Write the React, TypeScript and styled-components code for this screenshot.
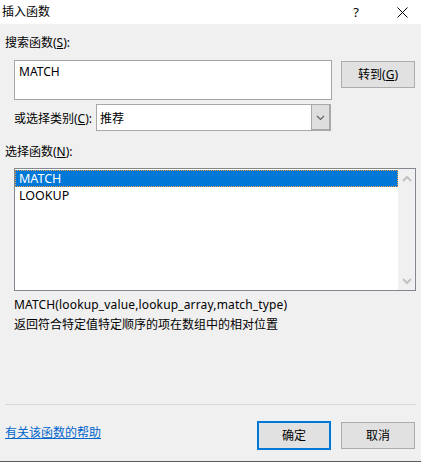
import React from "react";
import styled, { createGlobalStyle } from "styled-components";

const GlobalStyle = createGlobalStyle`
  html, body {
    margin: 0;
    padding: 0;
    background: #f0f0f0;
  }
  body {
    font-family: "Noto Sans", "Noto Sans CJK SC", sans-serif;
    font-size: 12px;
    color: #000;
  }
`;

const ChevronDown = ({ color = "#606060", size = 9 }: { color?: string; size?: number }) => (
  <svg width={size} height={size} viewBox="0 0 9 9">
    <path d="M1 3 L4.5 6.5 L8 3" fill="none" stroke={color} strokeWidth="1.2" />
  </svg>
);

const ChevronUp = ({ color = "#c2c2c2" }: { color?: string }) => (
  <svg width="10" height="8" viewBox="0 0 10 8">
    <path d="M1 6 L5 2 L9 6" fill="none" stroke={color} strokeWidth="2" />
  </svg>
);

export default function App() {
  const items = ["MATCH", "LOOKUP"];

  return (
    <Window>
      <GlobalStyle />
      <TitleBar>
        <Title>插入函数</Title>
        <TitleButtons>
          <Help>?</Help>
          <CloseIcon width="11" height="11" viewBox="0 0 11 11">
            <path d="M0.5 0.5 L10.5 10.5 M10.5 0.5 L0.5 10.5" stroke="#000" strokeWidth="1" />
          </CloseIcon>
        </TitleButtons>
      </TitleBar>

      <Body>
        <Label>搜索函数(<u>S</u>):</Label>
        <SearchRow>
          <SearchBox>MATCH</SearchBox>
          <Button>转到(<u>G</u>)</Button>
        </SearchRow>

        <CategoryRow>
          <span>或选择类别(<u>C</u>):</span>
          <Select>
            <SelectValue>推荐</SelectValue>
            <DropButton>
              <ChevronDown />
            </DropButton>
          </Select>
        </CategoryRow>

        <Label $top={13}>选择函数(<u>N</u>):</Label>
        <ListBox>
          <ListItems>
            {items.map((item, i) => (
              <ListItem key={item} $selected={i === 0}>
                {item}
              </ListItem>
            ))}
          </ListItems>
          <ScrollBar>
            <ChevronUp />
            <ChevronDownWrap>
              <ChevronUp />
            </ChevronDownWrap>
          </ScrollBar>
        </ListBox>

        <Description>
          <Signature>MATCH(lookup_value,lookup_array,match_type)</Signature>
          <div>返回符合特定值特定顺序的项在数组中的相对位置</div>
        </Description>
      </Body>

      <Separator />
      <Footer>
        <HelpLink href="#">有关该函数的帮助</HelpLink>
        <FooterButtons>
          <Button $primary>确定</Button>
          <Button>取消</Button>
        </FooterButtons>
      </Footer>
    </Window>
  );
}

const Window = styled.div`
  width: 421px;
  height: 462px;
  box-sizing: border-box;
  background: #f0f0f0;
  border-bottom: 1px solid #5a5a5a;
  display: flex;
  flex-direction: column;
`;

const TitleBar = styled.div`
  height: 24px;
  background: #fff;
  display: flex;
  align-items: center;
  justify-content: space-between;
  padding: 0 13px 0 2px;
`;

const Title = styled.div`
  font-size: 12px;
  line-height: 16px;
`;

const TitleButtons = styled.div`
  display: flex;
  align-items: center;
  gap: 38px;
`;

const Help = styled.span`
  font-size: 13px;
  line-height: 16px;
`;

const CloseIcon = styled.svg`
  display: block;
`;

const Body = styled.div`
  flex: 1;
  padding: 0 5px;
  display: flex;
  flex-direction: column;
`;

const Label = styled.div<{ $top?: number }>`
  margin-top: ${(p) => p.$top ?? 11}px;
  line-height: 16px;
`;

const SearchRow = styled.div`
  margin-top: 9px;
  margin-left: 9px;
  display: flex;
  align-items: flex-start;
  gap: 9px;
`;

const SearchBox = styled.div`
  width: 318px;
  height: 40px;
  box-sizing: border-box;
  background: #fff;
  border: 1px solid #a5a5a5;
  padding: 2px 4px;
  line-height: 18px;
`;

const Button = styled.div<{ $primary?: boolean }>`
  width: 74px;
  height: ${(p) => (p.$primary ? 29 : 27)}px;
  box-sizing: border-box;
  margin-top: ${(p) => (p.$primary ? 0 : 1)}px;
  background: #e1e1e1;
  border: ${(p) => (p.$primary ? "2px solid #0078d7" : "1px solid #adadad")};
  display: flex;
  align-items: center;
  justify-content: center;
  line-height: 16px;
`;

const CategoryRow = styled.div`
  margin-top: 4px;
  margin-left: 9px;
  display: flex;
  align-items: center;
  gap: 4px;
`;

const Select = styled.div`
  width: 235px;
  height: 27px;
  box-sizing: border-box;
  background: #fff;
  border: 1px solid #a8a8a8;
  display: flex;
`;

const SelectValue = styled.div`
  flex: 1;
  padding-left: 3px;
  display: flex;
  align-items: center;
`;

const DropButton = styled.div`
  width: 17px;
  background: #dedede;
  border-left: 1px solid #a8a8a8;
  border-right: 1px solid #a8a8a8;
  border-bottom: 1px solid #a8a8a8;
  display: flex;
  align-items: center;
  justify-content: center;
`;

const ListBox = styled.div`
  margin-top: 8px;
  margin-left: 9px;
  width: 402px;
  height: 123px;
  box-sizing: border-box;
  border: 1px solid #828790;
  background: #fff;
  display: flex;
`;

const ListItems = styled.div`
  flex: 1;
  padding: 1px 0 0 0;
`;

const ListItem = styled.div<{ $selected?: boolean }>`
  height: 17px;
  box-sizing: border-box;
  padding-left: 3px;
  line-height: 16px;
  font-size: 12.5px;
  color: ${(p) => (p.$selected ? "#fff" : "#000")};
  background: ${(p) => (p.$selected ? "#0078d7" : "transparent")};
  border: 1px dotted ${(p) => (p.$selected ? "#f0a040" : "transparent")};
`;

const ScrollBar = styled.div`
  width: 17px;
  background: #f0f0f0;
  display: flex;
  flex-direction: column;
  align-items: center;
  justify-content: space-between;
  padding: 6px 0 5px;
`;

const ChevronDownWrap = styled.div`
  transform: rotate(180deg);
  line-height: 0;
`;

const Description = styled.div`
  margin-top: 4px;
  margin-left: 9px;
  line-height: 20px;
`;

const Signature = styled.div`
  letter-spacing: 0.15px;
`;

const Separator = styled.div`
  height: 1px;
  background: #dadada;
  margin: 0 5px;
`;

const Footer = styled.div`
  height: 56px;
  padding: 16px 6px 0 5px;
  box-sizing: border-box;
  display: flex;
  align-items: flex-start;
  justify-content: space-between;
`;

const HelpLink = styled.a`
  color: #0066cc;
  text-decoration: underline;
  margin-top: 4px;
  line-height: 16px;
`;

const FooterButtons = styled.div`
  display: flex;
  gap: 10px;
`;
